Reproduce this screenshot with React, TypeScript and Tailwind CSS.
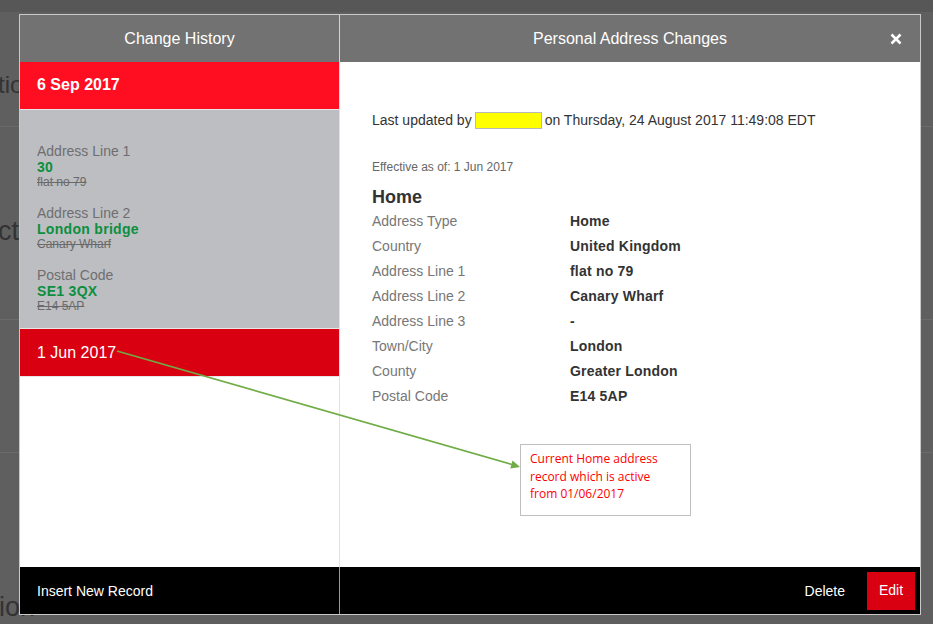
import React from "react";

const history = [
  { label: "Address Line 1", value: "30", old: "flat no 79" },
  { label: "Address Line 2", value: "London bridge", old: "Canary Wharf" },
  { label: "Postal Code", value: "SE1 3QX", old: "E14 5AP" },
];

const details: [string, string][] = [
  ["Address Type", "Home"],
  ["Country", "United Kingdom"],
  ["Address Line 1", "flat no 79"],
  ["Address Line 2", "Canary Wharf"],
  ["Address Line 3", "-"],
  ["Town/City", "London"],
  ["County", "Greater London"],
  ["Postal Code", "E14 5AP"],
];

export default function App() {
  return (
    <div className="relative w-[933px] h-[624px] overflow-hidden bg-[#5f5f5f] font-['Liberation_Sans',Arial,sans-serif]">
      {/* dimmed page behind the dialog */}
      <div className="flex flex-col h-full text-[#333]">
        <div className="h-[12px] bg-[#575757]" />
        <div className="h-[115px] border-b border-[#6a6a6a] pt-[58px]">
          <div className="-ml-[2px] text-[24px] leading-[30px] whitespace-nowrap">tio</div>
        </div>
        <div className="h-[193px] border-b border-[#6a6a6a] pt-[88px]">
          <div className="-ml-[2px] text-[27px] leading-[32px] whitespace-nowrap">ct</div>
        </div>
        <div className="h-[133px] border-b border-[#6a6a6a]" />
        <div className="flex-1 flex flex-col justify-end pb-[1px]">
          <div className="-ml-[1px] text-[27px] leading-[32px] whitespace-nowrap">ion</div>
        </div>
      </div>

      {/* dialog */}
      <div className="absolute left-[19px] top-[14px] w-[902px] h-[601px] border border-[#c9c9c9] bg-white flex flex-col">
        <div className="flex h-[47px] bg-[#727272] text-white text-[16px]">
          <div className="w-[320px] border-r border-[#d4d4d4] flex items-center justify-center">Change History</div>
          <div className="flex-1 relative flex items-center justify-center">
            Personal Address Changes
            <svg className="absolute right-[18px] top-[18px]" width="12" height="12" viewBox="0 0 12 12">
              <path d="M1.5 1.5 L10.5 10.5 M10.5 1.5 L1.5 10.5" stroke="white" strokeWidth="2.6" strokeLinecap="butt" />
            </svg>
          </div>
        </div>

        <div className="flex flex-1 min-h-0">
          <div className="w-[320px] border-r border-[#e2e2e2] flex flex-col">
            <div className="h-[48px] bg-[#ff0e22] text-white font-bold text-[16px] flex items-center pl-[17px] pb-[1px] border-b border-[#e6e6e6]">6 Sep 2017</div>
            <div className="bg-[#bdbec2] pt-[33px] pb-[15px] pl-[17px] flex flex-col gap-[16px] border-b border-[#e6e6e6]">
              {history.map((h) => (
                <div key={h.label} className="flex flex-col">
                  <div className="text-[14px] leading-[16px] text-[#6e6e70]">{h.label}</div>
                  <div className="text-[14px] leading-[16px] font-bold text-[#0b8f3e] tracking-[0.3px]">{h.value}</div>
                  <div className="text-[12px] leading-[14px] text-[#6a6a6a] line-through">{h.old}</div>
                </div>
              ))}
            </div>
            <div className="h-[48px] bg-[#d90012] text-white text-[16px] flex items-center pl-[17px] border-b border-[#e6e6e6]">1 Jun 2017</div>
          </div>

          <div className="flex-1 pl-[32px] pt-[48px] flex flex-col">
            <div className="text-[14px] leading-[20px] text-[#333] flex items-center">
              Last updated by
              <span className="inline-block w-[67px] h-[17px] bg-[#ffff00] border border-[#b8b8b8] mx-[3px]" />
              on Thursday, 24 August 2017 11:49:08 EDT
            </div>
            <div className="mt-[29px] text-[12px] leading-[16px] text-[#666]">Effective as of: 1 Jun 2017</div>
            <div className="mt-[10px] text-[18px] leading-[24px] font-bold text-[#333]">Home</div>
            <div className="flex flex-col">
              {details.map(([k, v]) => (
                <div key={k} className="flex h-[25px] items-center text-[14px]">
                  <div className="w-[198px] text-[#777]">{k}</div>
                  <div className="font-bold text-[#333] tracking-[0.2px]">{v}</div>
                </div>
              ))}
            </div>
          </div>
        </div>

        <div className="flex h-[47px] bg-black text-white text-[14px]">
          <div className="w-[320px] border-r border-[#9a9a9a] flex items-center pl-[17px] pt-[1px]">Insert New Record</div>
          <div className="flex-1 flex items-center justify-end pr-[5px]">
            <span className="mr-[22px] pt-[1px]">Delete</span>
            <div className="w-[48px] h-[38px] bg-[#d90012] flex items-center justify-center">Edit</div>
          </div>
        </div>
      </div>

      {/* annotation */}
      <div className="absolute left-[520px] top-[444px] w-[171px] h-[72px] border border-[#bfbfbf] bg-white pl-[9px] pt-[5px] text-[#ff0000] text-[12px] leading-[17.5px] font-['Open_Sans','Noto_Sans',sans-serif]">
        Current Home address<br />record which is active<br />from 01/06/2017
      </div>
      <svg className="absolute left-0 top-0 pointer-events-none" width="933" height="624" viewBox="0 0 933 624">
        <line x1="117" y1="351" x2="512" y2="464.5" stroke="#6fac46" strokeWidth="1.6" />
        <polygon points="520,467 510.3,468.4 512.5,460.6" fill="#6fac46" />
      </svg>
    </div>
  );
}
